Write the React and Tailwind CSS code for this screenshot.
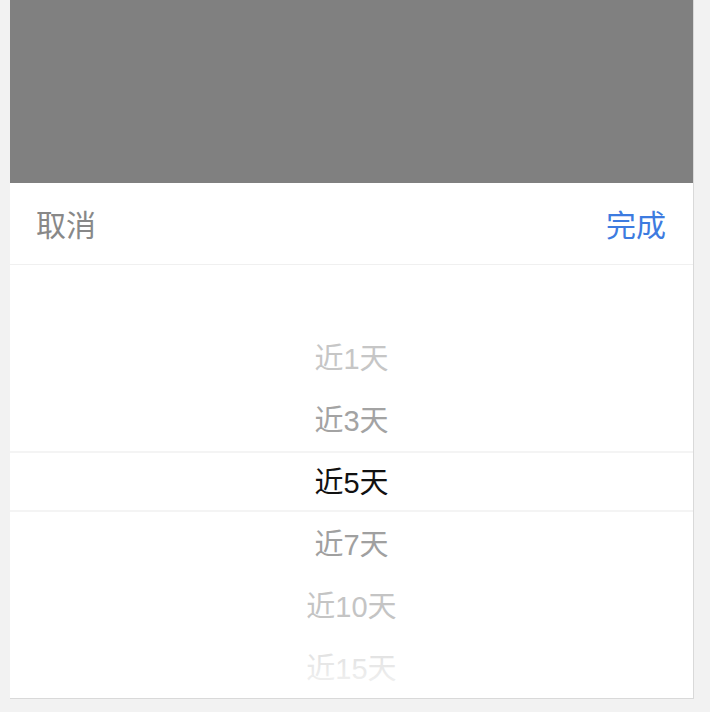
import React from 'react'

const items = [
  { label: '近1天', color: 'text-[#c6c6c6]' },
  { label: '近3天', color: 'text-[#a3a3a3]' },
  { label: '近5天', color: 'text-[#111111]' },
  { label: '近7天', color: 'text-[#a0a0a0]' },
  { label: '近10天', color: 'text-[#c4c4c4]' },
  { label: '近15天', color: 'text-[#dadada]' },
]

export default function App() {
  return (
    <div
      className="w-[710px] h-[712px] bg-[#f2f2f2] overflow-hidden"
      style={{ fontFamily: '"Liberation Sans", "Noto Sans CJK SC", sans-serif' }}
    >
      <div className="ml-[10px] w-[684px] h-[699px] bg-white border-r border-b border-[#d9d9d9] flex flex-col overflow-hidden">
        {/* mask */}
        <div className="h-[183px] shrink-0 bg-[#808080]" />

        {/* toolbar */}
        <div className="h-[82px] shrink-0 flex items-center justify-between pl-[26px] pr-[27px] pt-[4px] border-b border-[#f0f0f0]">
          <button type="button" className="text-[30px] leading-none text-[#888888]">取消</button>
          <button type="button" className="text-[30px] leading-none text-[#3d7be0]">完成</button>
        </div>

        {/* picker */}
        <div className="relative flex-1 overflow-hidden">
          <div className="pt-[64px] flex flex-col">
            {items.map((item) => (
              <div
                key={item.label}
                className={`h-[62px] shrink-0 flex items-center justify-center text-[29px] ${item.color}`}
              >
                {item.label}
              </div>
            ))}
          </div>
          <div className="absolute left-0 right-0 top-[186px] h-[61px] border-t-2 border-b-2 border-[#f4f4f4] pointer-events-none" />
          <div className="absolute left-0 right-0 bottom-0 h-[60px] bg-gradient-to-b from-white/0 to-white/80 pointer-events-none" />
        </div>
      </div>
    </div>
  )
}
